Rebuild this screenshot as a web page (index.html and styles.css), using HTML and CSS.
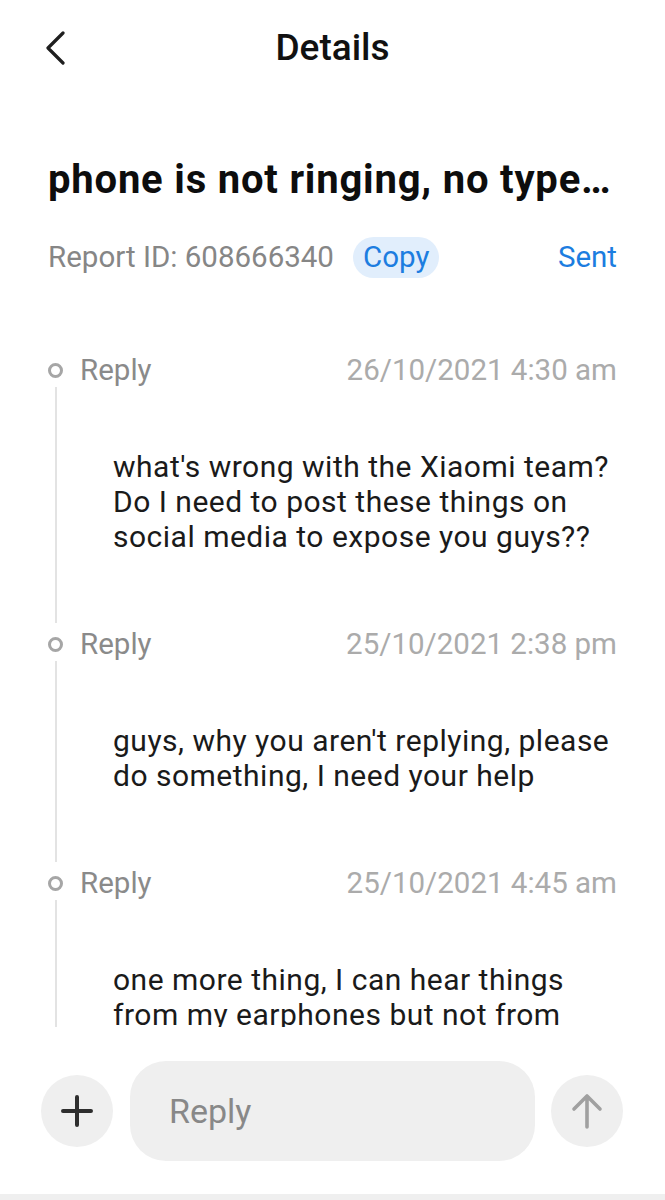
FILE: index.html
```html
<!DOCTYPE html>
<html lang="en">
<head>
<meta charset="utf-8">
<title>Details</title>
<link rel="stylesheet" href="styles.css">
</head>
<body>
<div class="screen">
  <header class="topbar">
    <button class="back" aria-label="Back">
      <svg width="22" height="34" viewBox="0 0 22 34"><path d="M18 2 L3 17 L18 32" fill="none" stroke="#1f1f1f" stroke-width="3.2" stroke-linecap="round" stroke-linejoin="round"/></svg>
    </button>
    <h1 class="page-title">Details</h1>
    <span class="spacer"></span>
  </header>

  <h2 class="report-title">phone is not ringing, no type…</h2>

  <div class="meta">
    <span class="report-id">Report ID: 608666340</span>
    <span class="copy">Copy</span>
    <span class="status">Sent</span>
  </div>

  <div class="thread">
    <div class="item">
      <div class="item-head">
        <span class="dot"></span>
        <span class="label">Reply</span>
        <span class="date">26/10/2021 4:30 am</span>
      </div>
      <div class="item-body">what's wrong with the Xiaomi team? Do I need to post these things on social media to expose you guys??</div>
    </div>
    <div class="item">
      <div class="item-head">
        <span class="dot"></span>
        <span class="label">Reply</span>
        <span class="date">25/10/2021 2:38 pm</span>
      </div>
      <div class="item-body">guys, why you aren't replying, please do something, I need your help</div>
    </div>
    <div class="item">
      <div class="item-head">
        <span class="dot"></span>
        <span class="label">Reply</span>
        <span class="date">25/10/2021 4:45 am</span>
      </div>
      <div class="item-body">one more thing, I can hear things from my earphones but not from phone speakers</div>
    </div>
  </div>

  <div class="composer">
    <button class="round-btn plus" aria-label="Add">
      <svg width="32" height="32" viewBox="0 0 32 32"><path d="M16 2 V30 M2 16 H30" stroke="#2e2e2e" stroke-width="4" stroke-linecap="round"/></svg>
    </button>
    <div class="input">Reply</div>
    <button class="round-btn send" aria-label="Send">
      <svg width="32" height="36" viewBox="0 0 32 36"><path d="M16 34 V3 M3 16 L16 3 L29 16" fill="none" stroke="#a0a0a0" stroke-width="3.6" stroke-linecap="round" stroke-linejoin="round"/></svg>
    </button>
  </div>
  <div class="navstrip"></div>
</div>
</body>
</html>
```

FILE: styles.css
```css
* { box-sizing: border-box; }
html, body { margin: 0; padding: 0; background: #ffffff; }
body {
  font-family: Roboto, "Noto Sans", "Liberation Sans", sans-serif;
  color: #1c1c1c;
}
.screen {
  width: 665px;
  height: 1200px;
  display: flex;
  flex-direction: column;
  overflow: hidden;
}
.topbar {
  height: 96px;
  display: grid;
  grid-template-columns: 1fr auto 1fr;
  align-items: center;
}
.back {
  justify-self: start;
  margin-left: 45px;
  padding: 0;
  border: 0;
  background: none;
  display: flex;
}
.page-title {
  margin: 0;
  font-size: 37px;
  font-weight: 500;
  color: #111;
  line-height: 48px;
}
.report-title {
  margin: 60px 40px 0 48px;
  font-size: 40px;
  font-weight: 700;
  letter-spacing: 0.8px;
  line-height: 48px;
  color: #0d0d0d;
  white-space: nowrap;
  overflow: hidden;
  text-overflow: ellipsis;
}
.meta {
  margin: 32px 48px 0 48px;
  height: 42px;
  display: flex;
  align-items: center;
  font-size: 29.5px;
}
.report-id { color: #868686; }
.copy {
  margin-left: 19px;
  height: 41px;
  line-height: 41px;
  padding: 0 10px;
  border-radius: 21px;
  background: #e1eefc;
  color: #1c7de0;
}
.status {
  margin-left: auto;
  color: #1c7de0;
}
.thread {
  flex: 1;
  min-height: 0;
  overflow: hidden;
  margin-top: 72px;
  padding: 0 48px;
}
.item-head {
  height: 40px;
  display: flex;
  align-items: center;
  font-size: 29.5px;
}
.dot {
  width: 15px;
  height: 15px;
  margin-left: 0;
  border: 3px solid #a6a6a6;
  border-radius: 50%;
}
.label {
  margin-left: 17px;
  color: #8a8a8a;
}
.date {
  margin-left: auto;
  color: #ababab;
}
.item-body {
  margin: -3px 0 1px 7px;
  padding: 62px 0 69px 56px;
  border-left: 2px solid #e3e3e3;
  font-size: 30px;
  letter-spacing: 0.5px;
  line-height: 35px;
  color: #1a1a1a;
}
.composer {
  height: 167px;
  flex: none;
  display: flex;
  align-items: center;
  padding: 0 42px 0 41px;
}
.round-btn {
  width: 72px;
  height: 72px;
  border-radius: 50%;
  border: 0;
  padding: 0;
  background: #efefef;
  display: flex;
  align-items: center;
  justify-content: center;
  flex: none;
}
.input {
  flex: 1;
  height: 100px;
  margin: 0 16px 0 17px;
  border-radius: 36px;
  background: #efefef;
  display: flex;
  align-items: center;
  padding-left: 39px;
  font-size: 34px;
  color: #888;
}
.navstrip {
  height: 6px;
  flex: none;
  background: #efefef;
}
```
